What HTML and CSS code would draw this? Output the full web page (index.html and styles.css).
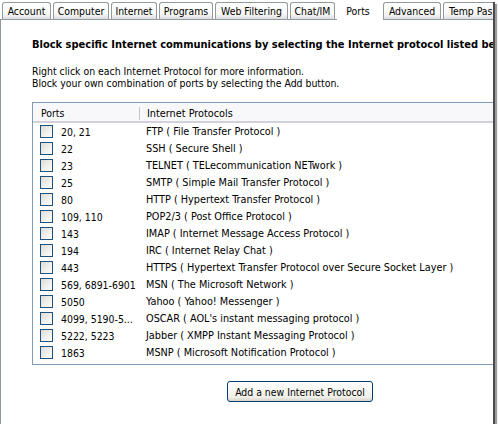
FILE: index.html
```html
<!DOCTYPE html>
<html lang="en">
<head>
    <meta charset="UTF-8">
    <title>Ports</title>
    <link rel="stylesheet" href="styles.css">
</head>
<body>
    <div class="window">
        <div class="tabs">
            <div class="tab tab-account">Account</div>
            <div class="tab tab-computer">Computer</div>
            <div class="tab tab-internet">Internet</div>
            <div class="tab tab-programs">Programs</div>
            <div class="tab tab-web">Web Filtering</div>
            <div class="tab tab-chat">Chat/IM</div>
            <div class="tab active">Ports</div>
            <div class="tab tab-advanced">Advanced</div>
            <div class="tab tab-temp">Temp Password</div>
        </div>

        <div class="panel">
            <p class="heading">Block specific Internet communications by selecting the Internet protocol listed below.</p>
            <p class="info">Right click on each Internet Protocol for more information.<br>Block your own combination of ports by selecting the Add button.</p>

            <div class="list">
                <div class="list-head">
                    <div class="col-ports">Ports</div>
                    <span class="divider"></span>
                    <div class="col-proto">Internet Protocols</div>
                </div>
                <div id="rows"></div>
            </div>

            <div class="actions">
                <button class="btn">Add a new Internet Protocol</button>
            </div>
        </div>
    </div>

    <script>
        const protocols = [
            ["20, 21", "FTP ( File Transfer Protocol )"],
            ["22", "SSH ( Secure Shell )"],
            ["23", "TELNET ( TELecommunication NETwork )"],
            ["25", "SMTP ( Simple Mail Transfer Protocol )"],
            ["80", "HTTP ( Hypertext Transfer Protocol )"],
            ["109, 110", "POP2/3 ( Post Office Protocol )"],
            ["143", "IMAP ( Internet Message Access Protocol )"],
            ["194", "IRC ( Internet Relay Chat )"],
            ["443", "HTTPS ( Hypertext Transfer Protocol over Secure Socket Layer )"],
            ["569, 6891-6901", "MSN ( The Microsoft Network )"],
            ["5050", "Yahoo ( Yahoo! Messenger )"],
            ["4099, 5190-5...", "OSCAR ( AOL's instant messaging protocol )"],
            ["5222, 5223", "Jabber ( XMPP Instant Messaging Protocol )"],
            ["1863", "MSNP ( Microsoft Notification Protocol )"]
        ];

        const rows = document.getElementById("rows");
        protocols.forEach(([ports, name]) => {
            const row = document.createElement("div");
            row.className = "row";
            row.innerHTML = `
                <div class="col-ports"><span class="check"></span>${ports}</div>
                <div class="col-proto">${name}</div>
            `;
            rows.appendChild(row);
        });
    </script>
</body>
</html>
```

FILE: styles.css
```css
body {
    margin: 0;
    background-color: #fff;
    font-family: "DejaVu Sans Condensed", "DejaVu Sans", sans-serif;
    font-size: 10.4px;
    color: #000;
}

.window {
    width: 493px;
    height: 424px;
    overflow: hidden;
    box-shadow: 2px 2px 0 #4a4a4a, 4px 4px 1px #9c9c9c;
}

/* tab strip */
.tabs {
    display: flex;
    align-items: flex-end;
    height: 19px;
    padding-left: 2px;
    width: 640px;
}

.tab {
    box-sizing: border-box;
    height: 17px;
    line-height: 16px;
    margin-right: 2px;
    border: 1px solid #919b9c;
    border-bottom: none;
    border-radius: 3px 3px 0 0;
    background: linear-gradient(#fff, #f7f7f4 70%, #dcdbe3);
    text-align: center;
    white-space: nowrap;
}

.tab-account { width: 49px; }
.tab-computer { width: 56px; }
.tab-internet { width: 46px; }
.tab-programs { width: 54px; }
.tab-web { width: 73px; }
.tab-chat { width: 45px; }
.tab-advanced { width: 58px; }
.tab-temp { width: 90px; text-align: left; padding-left: 5px; }

.tab.active {
    width: 46px;
    height: 19px;
    line-height: 18px;
    margin: 0 0 -1px 0;
    padding-right: 4px;
    background: #fff;
    border-color: #fff;
    position: relative;
}

/* page body */
.panel {
    width: 536px;
    height: 404px;
    border: 1px solid #919b9c;
    background-color: #fff;
    padding: 18px 31px 0;
}

.heading {
    margin: 0;
    font-size: 11px;
    font-weight: bold;
    line-height: 14px;
    white-space: nowrap;
}

.info {
    margin: 13px 0 0;
    line-height: 12px;
}

.list {
    margin-top: 13px;
    border: 1px solid #7f9db9;
    padding-bottom: 3px;
}

.list-head {
    display: flex;
    align-items: center;
    box-sizing: border-box;
    height: 20px;
    padding-top: 2px;
    background-color: #f8f8fb;
    border-bottom: 2px solid #d2d0dc;
}

.list-head .col-ports {
    width: 98px;
    padding-left: 8px;
}

.divider {
    width: 1px;
    height: 13px;
    background-color: #c5c3cc;
}

.list-head .col-proto {
    padding-left: 7px;
    font-size: 10.8px;
}

.row {
    display: flex;
    align-items: center;
    height: 17px;
}

.row .col-ports {
    display: flex;
    align-items: center;
    width: 100px;
    padding-left: 7px;
    white-space: nowrap;
}

.row .col-proto {
    padding-left: 6px;
    font-size: 10.8px;
    white-space: nowrap;
}

.check {
    flex: none;
    width: 11px;
    height: 11px;
    border: 1px solid #1c5180;
    background: linear-gradient(135deg, #dcdcd7, #fff);
    margin-right: 8px;
}

.actions {
    display: flex;
    justify-content: center;
    margin-top: 16px;
}

.btn {
    height: 21px;
    padding: 0 7px;
    border: 1px solid #003c74;
    border-radius: 3px;
    background: linear-gradient(#fff, #f0f0ea 80%, #d8d4c8);
    font-family: inherit;
    font-size: 10.4px;
    color: #000;
}
```
